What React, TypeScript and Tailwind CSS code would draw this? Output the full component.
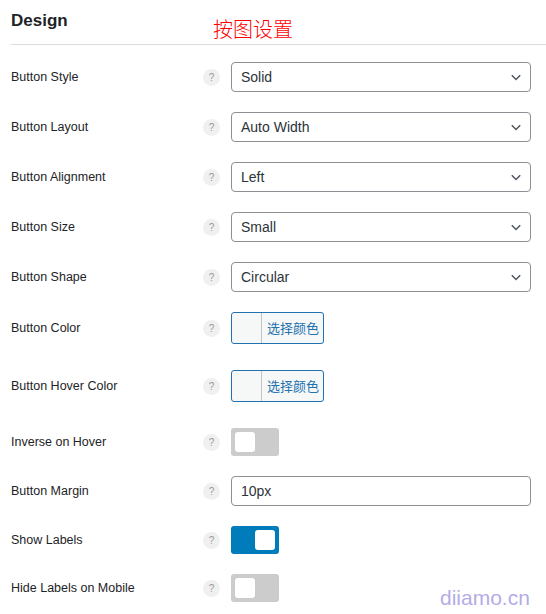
import React from 'react';

const font = {fontFamily: '"Liberation Sans", "Noto Sans CJK SC", sans-serif'};

const Help = () => (
    <div className="w-[28px] shrink-0 flex justify-start">
        <span className="w-[17px] h-[17px] rounded-full bg-[#f0f0f1] text-[#999] text-[10px] leading-[17px] text-center">?</span>
    </div>
);

const Select: React.FC<{value: string}> = ({value}) => (
    <div className="w-[300px] h-[30px] border border-[#8c8f94] rounded-[4px] bg-white flex items-center pl-[9px] pr-[7px] text-[14px] text-[#2c3338]">
        <span className="flex-1">{value}</span>
        <svg width="14" height="14" viewBox="0 0 20 20" fill="none" stroke="#50575e" strokeWidth="2.2">
            <path d="M4 7.5l6 6 6-6"/>
        </svg>
    </div>
);

const ColorBtn = () => (
    <div className="w-[93px] h-[32px] border border-[#2271b1] rounded-[3px] bg-[#f6f7f7] flex items-stretch">
        <div className="w-[30px] border-r border-[#c3c4c7]"></div>
        <span className="flex-1 flex items-center pl-[5px] text-[13px] text-[#2271b1]"
              style={{fontFamily: '"Noto Sans CJK SC", sans-serif'}}>选择颜色</span>
    </div>
);

const Toggle: React.FC<{on?: boolean}> = ({on}) => (
    <div className={`w-[48px] h-[28px] rounded-[3px] p-[4px] flex ${on ? 'bg-[#007cba] justify-end' : 'bg-[#cccccc] justify-start'}`}>
        <div className="w-[20px] h-[20px] rounded-[3px] bg-white"></div>
    </div>
);

const Row: React.FC<{label: string; mt: string; children: React.ReactNode}> = ({label, mt, children}) => (
    <div className={`flex items-center ${mt}`}>
        <div className="w-[192px] shrink-0 text-[12.5px] text-[#1d2327]">{label}</div>
        <Help/>
        {children}
    </div>
);

export default function App() {
    return (
        <div className="relative w-[546px] h-[614px] bg-white overflow-hidden" style={font}>
            <div className="pl-[11px]">
                <div className="h-[45px] border-b border-[#dcdcde] pt-[8px] text-[17px] font-bold text-[#1d2327]">Design</div>
                <div className="pt-[17px] flex flex-col">
                    <Row label="Button Style" mt="">
                        <Select value="Solid"/>
                    </Row>
                    <Row label="Button Layout" mt="mt-[20px]">
                        <Select value="Auto Width"/>
                    </Row>
                    <Row label="Button Alignment" mt="mt-[20px]">
                        <Select value="Left"/>
                    </Row>
                    <Row label="Button Size" mt="mt-[20px]">
                        <Select value="Small"/>
                    </Row>
                    <Row label="Button Shape" mt="mt-[20px]">
                        <Select value="Circular"/>
                    </Row>
                    <Row label="Button Color" mt="mt-[20px]">
                        <ColorBtn/>
                    </Row>
                    <Row label="Button Hover Color" mt="mt-[26px]">
                        <ColorBtn/>
                    </Row>
                    <Row label="Inverse on Hover" mt="mt-[26px]">
                        <Toggle/>
                    </Row>
                    <Row label="Button Margin" mt="mt-[20px]">
                        <div className="w-[300px] h-[30px] border border-[#8c8f94] rounded-[4px] bg-white flex items-center pl-[9px] text-[14px] text-[#2c3338]">10px</div>
                    </Row>
                    <Row label="Show Labels" mt="mt-[20px]">
                        <Toggle on/>
                    </Row>
                    <Row label="Hide Labels on Mobile" mt="mt-[20px]">
                        <Toggle/>
                    </Row>
                </div>
            </div>

            <div className="absolute left-[213px] top-[14px] text-[20px] text-[#ff0000] font-light"
                 style={{fontFamily: '"Noto Sans CJK SC", sans-serif'}}>按图设置</div>
            <div className="absolute left-[440px] top-[582px] text-[21px] text-[#b3ace6]"
                 style={{fontFamily: '"Liberation Sans", sans-serif'}}>diiamo.cn</div>
        </div>
    );
}
